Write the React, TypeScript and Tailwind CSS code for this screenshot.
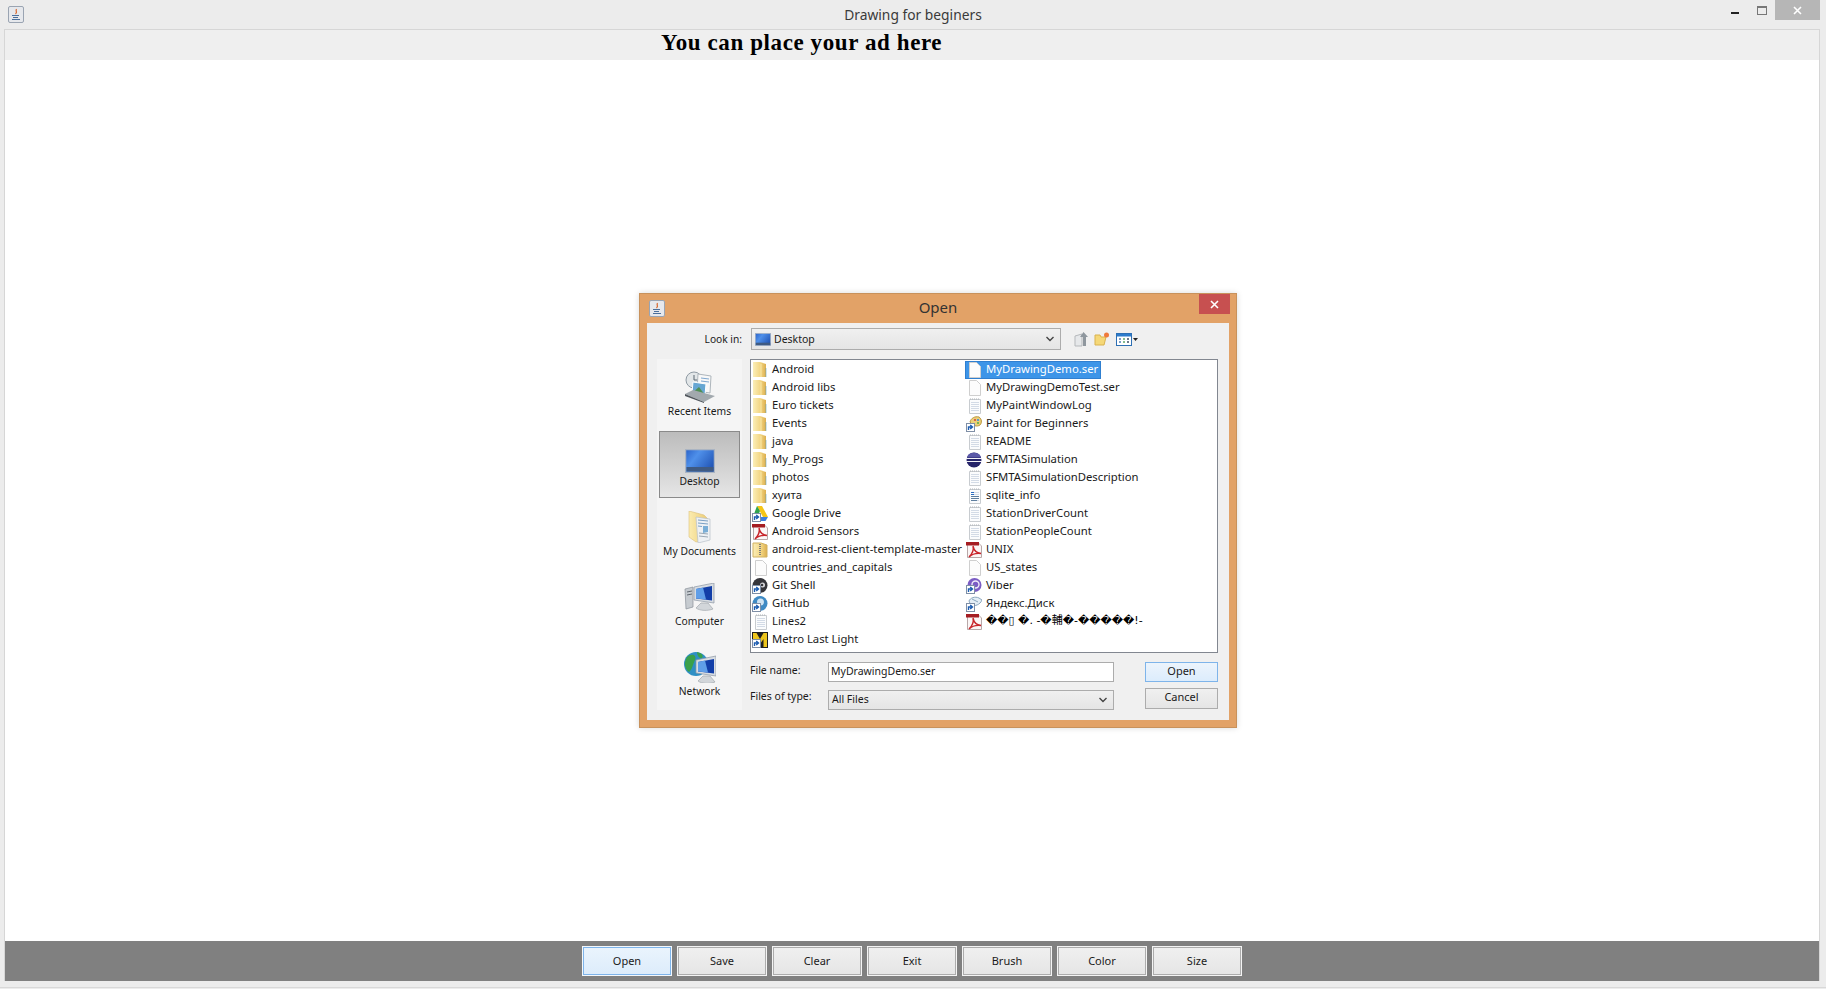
import React from 'react';

type IconKind =
  | 'folder'
  | 'drive'
  | 'pdf'
  | 'zip'
  | 'blank'
  | 'text'
  | 'gitshell'
  | 'github'
  | 'metro'
  | 'paint'
  | 'eclipse'
  | 'sqlite'
  | 'viber'
  | 'yandex';

const leftFiles: [string, IconKind][] = [
  ['Android', 'folder'],
  ['Android libs', 'folder'],
  ['Euro tickets', 'folder'],
  ['Events', 'folder'],
  ['java', 'folder'],
  ['My_Progs', 'folder'],
  ['photos', 'folder'],
  ['хуита', 'folder'],
  ['Google Drive', 'drive'],
  ['Android Sensors', 'pdf'],
  ['android-rest-client-template-master', 'zip'],
  ['countries_and_capitals', 'blank'],
  ['Git Shell', 'gitshell'],
  ['GitHub', 'github'],
  ['Lines2', 'text'],
  ['Metro Last Light', 'metro'],
];

const rightFiles: [string, IconKind][] = [
  ['MyDrawingDemo.ser', 'blank'],
  ['MyDrawingDemoTest.ser', 'blank'],
  ['MyPaintWindowLog', 'text'],
  ['Paint for Beginners', 'paint'],
  ['README', 'text'],
  ['SFMTASimulation', 'eclipse'],
  ['SFMTASimulationDescription', 'text'],
  ['sqlite_info', 'sqlite'],
  ['StationDriverCount', 'text'],
  ['StationPeopleCount', 'text'],
  ['UNIX', 'pdf'],
  ['US_states', 'blank'],
  ['Viber', 'viber'],
  ['Яндекс.Диск', 'yandex'],
];

function Shortcut() {
  return (
    <g>
      <rect x="0.5" y="7.5" width="8" height="8" fill="#fff" stroke="#7f8fa6" />
      <path d="M2.5 14 V11 H6 M4.2 9 L6.5 11 L4.2 13" fill="none" stroke="#1c5cb0" strokeWidth="1.4" />
    </g>
  );
}

function FileIcon({ kind }: { kind: IconKind }) {
  const page = <path d="M3.5 0.5 H10.5 L14.5 4.5 V15.5 H3.5 Z" fill="#fcfcfc" stroke="#cfcfcf" />;
  const lined = (
    <g>
      <path d="M3.5 1.5 H14.5 V15.5 H3.5 Z" fill="#fbfcfd" stroke="#c8ccd0" />
      <path d="M4 1 H14" stroke="#b0b4b8" strokeDasharray="1 1" />
      <path d="M5 4.5 H13 M5 6.5 H13 M5 8.5 H13 M5 10.5 H13 M5 12.5 H13" stroke="#d3dbe6" />
    </g>
  );
  return (
    <svg width="16" height="16" viewBox="0 0 16 16" className="shrink-0">
      <defs>
        <linearGradient id="folderFill" x1="0" y1="0" x2="1" y2="0">
          <stop offset="0" stopColor="#fbeeb8" />
          <stop offset="0.6" stopColor="#f2d480" />
          <stop offset="1" stopColor="#dcae4e" />
        </linearGradient>
      </defs>
      {kind === 'folder' && (
        <g>
          <path d="M1 0 H8 L14 2 V15 H1 Z" fill="url(#folderFill)" />
          <path d="M9 2 V15" stroke="#f8e6a6" />
          <path d="M14 6 V15" stroke="#4a98c0" strokeOpacity="0.5" />
        </g>
      )}
      {kind === 'zip' && (
        <g>
          <path d="M1 1 H9 L15 3 V15 H1 Z" fill="url(#folderFill)" stroke="#d2b263" />
          <path d="M8 2 V14" stroke="#7d7d7d" strokeWidth="2" strokeDasharray="1 1" />
        </g>
      )}
      {kind === 'blank' && page}
      {kind === 'text' && lined}
      {kind === 'sqlite' && (
        <g>
          {lined}
          <path d="M5 4.5 H8 M5 6.5 H8" stroke="#2a6cc0" />
          <path d="M5 8.5 H13 M5 10.5 H13 M5 12.5 H11" stroke="#5f7f9f" />
        </g>
      )}
      {kind === 'pdf' && (
        <g>
          <path d="M1.5 0.5 H12 L15.5 4 V15.5 H1.5 Z" fill="#fbf6f6" stroke="#b8a8a8" />
          <path d="M0 0 H13 V3.5 H0 Z" fill="#a51d22" />
          <path d="M7 4 C8 9 10 11 15 11.5 C10 11 6 12 3 15 C6 12 8 8 7 4 Z" fill="none" stroke="#c8242a" strokeWidth="1.4" />
        </g>
      )}
      {kind === 'drive' && (
        <g>
          <path d="M5 0 H10 L16 11 H11 Z" fill="#f5c518" />
          <path d="M5 0 L8 5 L5 12 L2 8 Z" fill="#2fa34f" />
          <path d="M6 11 H16 L13.5 15 H8 Z" fill="#3d7fe0" />
          <Shortcut />
        </g>
      )}
      {kind === 'gitshell' && (
        <g>
          <circle cx="8" cy="7.5" r="7.5" fill="#35353a" />
          <circle cx="10.5" cy="7" r="2.5" fill="#d8d8dc" />
          <circle cx="10" cy="7" r="1.3" fill="#35353a" />
          <Shortcut />
        </g>
      )}
      {kind === 'github' && (
        <g>
          <circle cx="8" cy="7.5" r="7.5" fill="#3f8ac4" />
          <circle cx="8.5" cy="6" r="3.5" fill="#cfe3f2" />
          <Shortcut />
        </g>
      )}
      {kind === 'metro' && (
        <g>
          <rect x="0" y="0" width="16" height="16" fill="#1e1e1e" />
          <path d="M1 1 H4.5 L8 7 L11.5 1 H15 V15 H11.5 V7 L8 12 L4.5 7 V15 H1 Z" fill="#ecc41c" />
          <Shortcut />
        </g>
      )}
      {kind === 'paint' && (
        <g>
          <path d="M4 6 C5 2 9 0 13 1 C16 3 16 7 14 9 C11 11 7 10 4 6 Z" fill="#ecd078" stroke="#b8963f" />
          <circle cx="9" cy="4" r="1.1" fill="#d84a3a" />
          <circle cx="12" cy="4" r="1.1" fill="#3c8ad8" />
          <circle cx="12" cy="7" r="1.1" fill="#5cb04a" />
          <Shortcut />
        </g>
      )}
      {kind === 'eclipse' && (
        <g>
          <circle cx="8" cy="8" r="7.5" fill="#26246a" />
          <path d="M2 3 C5 0 11 0 14 3 L15 5.5 H1 Z" fill="#5b59a8" />
          <path d="M0 6 H16 V7 H0 Z M0 9 H16 V10 H0 Z" fill="#f4f4f8" />
        </g>
      )}
      {kind === 'viber' && (
        <g>
          <circle cx="8.5" cy="7" r="7" fill="#7b5cc4" />
          <circle cx="9.5" cy="6.5" r="3.5" fill="none" stroke="#efeafa" strokeWidth="1.4" />
          <Shortcut />
        </g>
      )}
      {kind === 'yandex' && (
        <g>
          <path d="M3 5 C4 2 9 0 13 2 L16 4 C14 9 9 10 5 10 Z" fill="#e4eef6" stroke="#8aa6bd" />
          <path d="M6 3 L12 6" stroke="#8aa6bd" />
          <Shortcut />
        </g>
      )}
    </svg>
  );
}

function JavaIcon() {
  return (
    <svg width="16" height="17" viewBox="0 0 16 17">
      <rect x="0.5" y="0.5" width="15" height="16" rx="1.5" fill="#e6e8ec" stroke="#9aa4b2" />
      <path d="M8.5 3 C7 5 10 6 7.5 8" fill="none" stroke="#d8652a" strokeWidth="1.2" />
      <path d="M4 9.5 H11 M5 11.5 H10 M4 13.5 H12" stroke="#4a6f9c" />
    </svg>
  );
}

function DesktopIcon({ w, h }: { w: number; h: number }) {
  return (
    <svg width={w} height={h} viewBox="0 0 30 24">
      <defs>
        <linearGradient id="deskFill" x1="0" y1="0" x2="1" y2="0.6">
          <stop offset="0" stopColor="#2a62c8" />
          <stop offset="0.4" stopColor="#4f90ea" />
          <stop offset="1" stopColor="#2458b8" />
        </linearGradient>
      </defs>
      <rect x="0.5" y="0.5" width="29" height="23" fill="url(#deskFill)" stroke="#aab4c2" strokeWidth="1.5" />
      <rect x="1.5" y="18" width="27" height="4.5" fill="#3f5a82" />
    </svg>
  );
}

function RecentIcon() {
  return (
    <svg width="32" height="32" viewBox="0 0 32 32">
      <circle cx="10" cy="9" r="8" fill="#e2e6e8" stroke="#8f9aa3" />
      <path d="M10 4 V9 H14" fill="none" stroke="#5b6670" />
      <path d="M14 3 L27 5 L26 22 L13 20 Z" fill="#f8f8f8" stroke="#aeb6bc" />
      <path d="M17 7 L25 8 M17 10 L25 11" stroke="#7da6cf" />
      <path d="M9 11 L22 13 L21 24 L8 22 Z" fill="#66a6d2" stroke="#fff" />
      <path d="M8 22 L15 16 L21 24 Z" fill="#4f8f55" />
      <path d="M1 23 L9 19 L31 25 L20 31 Z" fill="#a2a9ae" />
      <path d="M1 23 L20 31 V32 L1 25 Z" fill="#50565c" />
    </svg>
  );
}

function DocsIcon() {
  return (
    <svg width="24" height="32" viewBox="0 0 24 32">
      <defs>
        <linearGradient id="docsFolder" x1="0" y1="0" x2="1" y2="0">
          <stop offset="0" stopColor="#fbecb0" />
          <stop offset="1" stopColor="#eccb74" />
        </linearGradient>
      </defs>
      <path d="M1 0 L16 4 L20 8 V28 L8 31 L1 26 Z" fill="url(#docsFolder)" stroke="#dcc078" strokeWidth="0.6" />
      <path d="M8 6 L22 8 V29 L10 32 Z" fill="#eef1f4" stroke="#b8c0c8" strokeWidth="0.7" />
      <path d="M10 9 L20 10 M10 12 L20 13 M10 15 L14 15.5" stroke="#7aa0c4" />
      <path d="M15 15 L20 15 V21 L15 22 Z" fill="#7aaed6" />
      <path d="M11 22 L20 23 M11 25 L20 26" stroke="#9aa8b4" />
    </svg>
  );
}

function MonitorGlyph() {
  return (
    <g>
      <path d="M10 4 L30 0 V20 L10 17 Z" fill="#d8dde2" stroke="#8d97a3" strokeWidth="0.7" />
      <path d="M12 6 L28 3 V17.5 L12 15.5 Z" fill="#123ea8" />
      <path d="M12 6 L19 4.6 L22 16.5 L12 15.5 Z" fill="#5f9ee8" />
      <path d="M17 20 H24 L29 26 C24 28 16 28 12 25 Z" fill="#d2d6da" stroke="#a2a8ae" strokeWidth="0.7" />
    </g>
  );
}

function ComputerIcon() {
  return (
    <svg width="32" height="30" viewBox="0 0 32 30">
      <path d="M1 6 L9 4 V24 L2 26 Z" fill="#c6cbd0" stroke="#8a9199" strokeWidth="0.7" />
      <path d="M3 9 L8 8 M3 12 L8 11" stroke="#5f666e" />
      <MonitorGlyph />
    </svg>
  );
}

function NetworkIcon() {
  return (
    <svg width="32" height="32" viewBox="0 0 32 32">
      <circle cx="12" cy="13" r="12" fill="#2f8fc4" />
      <path d="M3 6 C8 2 13 4 11 9 C9 13 8 19 5 21 C0 17 0 11 3 6 Z" fill="#3aa04a" />
      <path d="M13 1 C17 2 20 4 18 7 C16 8 13 5 13 1 Z" fill="#3aa04a" />
      <g transform="translate(2 5)">
        <MonitorGlyph />
      </g>
    </svg>
  );
}

function PlaceItem({ label, icon, selected }: { label: string; icon: React.ReactNode; selected?: boolean }) {
  return (
    <div className="relative flex h-[70px] flex-col items-center">
      {selected && (
        <div className="absolute inset-x-[2px] top-[2px] bottom-px border border-[#8a8a8a] bg-gradient-to-b from-[#bcbcbc] to-[#e6e6e6]" />
      )}
      <div className="relative flex h-[44px] items-end justify-center">{icon}</div>
      <div className="relative mt-[1px] text-[10.3px] leading-[14px] text-[#1a1a1a]">{label}</div>
    </div>
  );
}

function Chevron() {
  return (
    <svg width="8" height="6" viewBox="0 0 8 6">
      <path d="M0.5 1 L4 4.5 L7.5 1" fill="none" stroke="#444" strokeWidth="1.4" />
    </svg>
  );
}

function FileRow({ name, icon, selected }: { name: string; icon: IconKind; selected?: boolean }) {
  return (
    <div
      className={
        selected
          ? '-ml-px flex h-[18px] w-fit items-center gap-[3px] whitespace-nowrap border border-[#2f7fd0] bg-[#3d95e8] pr-px text-white'
          : 'flex h-[18px] items-center gap-[3px] whitespace-nowrap'
      }
    >
      <FileIcon kind={icon} />
      <span className="mb-[2px] px-[1px] leading-[16px]">{name}</span>
    </div>
  );
}

function OpenDialog() {
  return (
    <div className="absolute left-[639px] top-[293px] flex h-[435px] w-[598px] flex-col border border-[#c8925c] bg-[#e2a267] shadow-[0_0_6px_rgba(0,0,0,0.15)]">
      <div className="grid h-[29px] grid-cols-[1fr_auto_1fr] items-center">
        <div className="pl-[9px]">
          <JavaIcon />
        </div>
        <div className="mb-[2px] text-[15px] text-[#333]">Open</div>
        <div className="flex justify-end self-start pr-[6px]">
          <div className="flex h-[20px] w-[31px] items-center justify-center bg-[#c75050]">
            <svg width="9" height="9" viewBox="0 0 9 9">
              <path d="M1 1 L8 8 M8 1 L1 8" stroke="#fff" strokeWidth="1.6" />
            </svg>
          </div>
        </div>
      </div>
      <div className="mx-[7px] h-[397px] bg-[#f0f0f0] pt-[5px] text-[10.5px] text-[#1a1a1a]">
        <div className="flex h-[22px] items-center">
          <div className="mt-[1px] w-[95px] text-right text-[10.2px]">Look in:</div>
          <div className="ml-[9px] flex h-[22px] w-[310px] items-center justify-between border border-[#acacac] bg-gradient-to-b from-[#f0f0f0] to-[#e5e5e5] px-[3px] pr-[6px]">
            <div className="flex items-center gap-[3px]">
              <DesktopIcon w={16} h={13} />
              <span className="mt-[1px]">Desktop</span>
            </div>
            <Chevron />
          </div>
          <div className="ml-[13px] flex items-center gap-[6px]">
            <svg width="14" height="16" viewBox="0 0 14 16">
              <path d="M1 5 L8 3 V15 L1 15 Z" fill="#e6e8ea" stroke="#b5b8bb" />
              <path d="M9 15 V6 H6 L9.5 1 L14 6 H12 V15 Z" fill="#8f979e" />
            </svg>
            <svg width="16" height="14" viewBox="0 0 16 14">
              <path d="M1 3 H6 L7 5 H12 L10 13 H1 Z" fill="#f5d878" stroke="#d9b24e" />
              <circle cx="12.5" cy="3" r="2.5" fill="#ef7a3c" />
            </svg>
            <div className="flex items-center gap-px">
              <svg width="16" height="13" viewBox="0 0 16 13">
                <rect x="0.5" y="0.5" width="15" height="12" fill="#fff" stroke="#2d6fb4" />
                <rect x="1" y="1" width="14" height="2.5" fill="#2d7ccc" />
                <path d="M3 6 H5 M3 9 H5" stroke="#4d7fb6" strokeWidth="1.6" />
                <path d="M7 6 H9 M7 9 H9" stroke="#5ea86a" strokeWidth="1.6" />
                <path d="M11 6 H13 M11 9 H13" stroke="#3c4f66" strokeWidth="1.6" />
              </svg>
              <svg width="5" height="3" viewBox="0 0 5 3">
                <path d="M0 0 H5 L2.5 3 Z" fill="#222" />
              </svg>
            </div>
          </div>
        </div>

        <div className="mt-[9px] flex">
          <div className="ml-[10px] h-[351px] w-[85px] bg-[#f5f5f5]">
            <PlaceItem label="Recent Items" icon={<RecentIcon />} />
            <PlaceItem label="Desktop" icon={<DesktopIcon w={30} h={24} />} selected />
            <PlaceItem label="My Documents" icon={<DocsIcon />} />
            <PlaceItem label="Computer" icon={<ComputerIcon />} />
            <PlaceItem label="Network" icon={<NetworkIcon />} />
          </div>

          <div className="ml-[8px] w-[468px]">
            <div className="grid h-[294px] grid-cols-[214px_1fr] content-start overflow-hidden border border-[#828790] bg-white pl-[1px] pt-px text-[11.3px]">
              <div>
                {leftFiles.map(([name, icon]) => (
                  <FileRow key={name} name={name} icon={icon} />
                ))}
              </div>
              <div>
                {rightFiles.map(([name, icon], i) => (
                  <FileRow key={name} name={name} icon={icon} selected={i === 0} />
                ))}
                <div className="flex h-[18px] items-center gap-[3px] whitespace-nowrap">
                  <FileIcon kind="pdf" />
                  <span className="mb-[2px] px-[1px] font-['DejaVu_Sans','Noto_Sans_CJK_SC',sans-serif] text-[11px] leading-[16px] text-black">
                    ��▯ �. -�輔�-�����!-
                  </span>
                </div>
              </div>
            </div>

            <div className="mt-[9px] flex h-[20px] items-center">
              <div className="mb-[2px] w-[78px]">File name:</div>
              <div className="flex h-[20px] w-[286px] items-center border border-[#acacac] bg-white px-[2px]">MyDrawingDemo.ser</div>
              <div className="ml-[31px] flex h-[20px] w-[73px] items-center justify-center border border-[#7eb4ea] bg-gradient-to-b from-[#ecf4fc] to-[#dcecfc] pb-[2px] text-[11px]">
                Open
              </div>
            </div>
            <div className="mt-[6px] flex h-[22px] items-start">
              <div className="w-[78px] leading-[16px]">Files of type:</div>
              <div className="mt-[2px] flex h-[20px] w-[286px] items-center justify-between border border-[#acacac] bg-gradient-to-b from-[#f0f0f0] to-[#e5e5e5] px-[3px] pr-[6px]">
                <span>All Files</span>
                <Chevron />
              </div>
              <div className="ml-[31px] flex h-[21px] w-[73px] items-center justify-center border border-[#acacac] bg-gradient-to-b from-[#f0f0f0] to-[#e5e5e5] pb-[2px] text-[11px]">
                Cancel
              </div>
            </div>
          </div>
        </div>
      </div>
    </div>
  );
}

const toolbarButtons = ['Open', 'Save', 'Clear', 'Exit', 'Brush', 'Color', 'Size'];

export default function App() {
  return (
    <div className="relative flex h-[989px] w-full flex-col overflow-hidden bg-[#ececec] font-['Noto_Sans',sans-serif]">
      <div className="relative flex h-[29px] shrink-0 items-center justify-center">
        <div className="absolute left-[8px] top-[6px]">
          <JavaIcon />
        </div>
        <span className="mt-[1px] text-[13.8px] text-[#3a3a3a]">Drawing for beginers</span>
        <div className="absolute right-[6px] top-0 flex items-start">
          <div className="mt-[12px] mr-[18px] h-[2px] w-[8px] bg-[#222]" />
          <div className="mt-[6px] mr-[8px] h-[9px] w-[10px] border border-[#777] border-t-2" />
          <div className="flex h-[20px] w-[45px] items-center justify-center bg-[#b6b6b6]">
            <svg width="9" height="9" viewBox="0 0 9 9">
              <path d="M1 1 L8 8 M8 1 L1 8" stroke="#fff" strokeWidth="1.6" />
            </svg>
          </div>
        </div>
      </div>

      <div className="ml-[4px] mr-[6px] flex h-[952px] flex-col border-x border-t border-[#d6d6d6]">
        <div className="h-[30px] shrink-0 bg-[#efefef] pl-[656px] font-['Liberation_Serif',serif] text-[23px] font-bold leading-[26px] tracking-[0.6px] text-black">
          You can place your ad here
        </div>
        <div className="flex-1 bg-white" />
        <div className="flex h-[40px] shrink-0 items-center justify-center gap-[5px] bg-[#808080]">
          {toolbarButtons.map((b, i) => (
            <div
              key={b}
              className={
                i === 0
                  ? 'flex h-[30px] w-[90px] items-center justify-center border border-[#f4f8fc] bg-gradient-to-b from-[#eaf4fd] to-[#dcecfb] text-[11px] text-[#1a1a1a] shadow-[inset_0_0_0_1px_#7eb4ea]'
                  : 'flex h-[30px] w-[90px] items-center justify-center border border-[#f4f4f4] bg-gradient-to-b from-[#f0f0f0] to-[#e5e5e5] text-[11px] text-[#1a1a1a] shadow-[inset_0_0_0_1px_#acacac]'
              }
            >
              {b}
            </div>
          ))}
        </div>
      </div>
      <div className="mt-[6px] h-px shrink-0 bg-[#d8d8d8]" />

      <OpenDialog />
    </div>
  );
}
